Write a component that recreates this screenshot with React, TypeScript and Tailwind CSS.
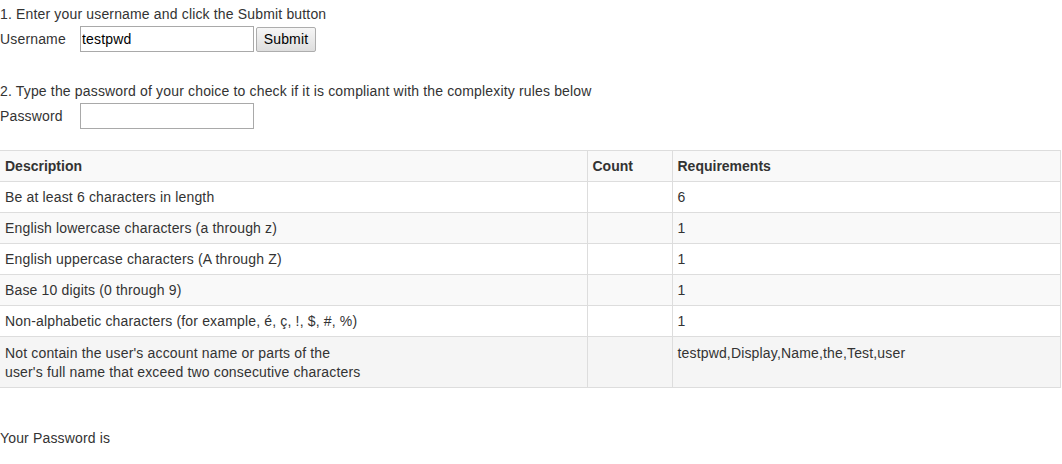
const rules: { desc: string[]; req: string }[] = [
  { desc: ['Be at least 6 characters in length'], req: '6' },
  { desc: ['English lowercase characters (a through z)'], req: '1' },
  { desc: ['English uppercase characters (A through Z)'], req: '1' },
  { desc: ['Base 10 digits (0 through 9)'], req: '1' },
  { desc: ['Non-alphabetic characters (for example, é, ç, !, $, #, %)'], req: '1' },
  {
    desc: [
      "Not contain the user's account name or parts of the",
      "user's full name that exceed two consecutive characters",
    ],
    req: 'testpwd,Display,Name,the,Test,user',
  },
];

export default function App() {
  return (
    <div className="w-[1062px] h-[464px] bg-white text-[14px] leading-[20px] tracking-[0.16px] text-[#333333] font-['Liberation_Sans',Arial,sans-serif] overflow-hidden">
      <div className="pt-[4px]">1. Enter your username and click the Submit button</div>

      {/* Username row */}
      <div className="flex items-center h-[26px] mt-[2px]">
        <span className="w-[80px]">Username</span>
        <input
          defaultValue="testpwd"
          className="w-[174px] h-[26px] border border-[#a9a9a9] px-[1px] text-[14px] text-black outline-none"
        />
        <button className="ml-[2px] h-[25px] w-[60px] border border-[#adadad] rounded-[2px] bg-gradient-to-b from-[#f6f6f6] to-[#dedede] text-[14px] text-black">
          Submit
        </button>
      </div>

      <div className="mt-[29px]">2. Type the password of your choice to check if it is compliant with the complexity rules below</div>

      {/* Password row */}
      <div className="flex items-center h-[26px] mt-[2px]">
        <span className="w-[80px]">Password</span>
        <input
          type="password"
          className="w-[174px] h-[26px] border border-[#a9a9a9] px-[1px] outline-none"
        />
      </div>

      <table className="mt-[21px] w-[1061px] border-collapse table-fixed">
        <colgroup>
          <col className="w-[587px]" />
          <col className="w-[85px]" />
          <col />
        </colgroup>
        <thead>
          <tr className="bg-[#f9f9f9] h-[31px]">
            <th className="text-left font-bold tracking-normal px-[5px] py-[5px] border-y border-[#dddddd] align-top">Description</th>
            <th className="text-left font-bold tracking-normal px-[5px] py-[5px] border border-[#dddddd] align-top">Count</th>
            <th className="text-left font-bold tracking-normal px-[5px] py-[5px] border border-[#dddddd] align-top">Requirements</th>
          </tr>
        </thead>
        <tbody>
          {rules.map((r, i) => {
            const last = i === rules.length - 1;
            const pad = last ? 'pt-[7px] pb-[5px]' : 'py-[5px]';
            return (
              <tr
                key={i}
                className={last ? 'bg-[#f5f5f5]' : i % 2 === 1 ? 'bg-[#f9f9f9]' : 'bg-white'}
              >
                <td className={`px-[5px] border-y border-[#dddddd] align-top ${pad} ${last ? 'leading-[19px]' : ''}`}>
                  {r.desc.map((d, j) => (
                    <div key={j}>{d}</div>
                  ))}
                </td>
                <td className={`px-[5px] border border-[#dddddd] align-top ${pad}`}></td>
                <td className={`px-[5px] border border-[#dddddd] align-top ${pad} ${last ? 'leading-[19px]' : ''}`}>{r.req}</td>
              </tr>
            );
          })}
        </tbody>
      </table>

      <div className="mt-[40px]">Your Password is</div>
    </div>
  );
}
